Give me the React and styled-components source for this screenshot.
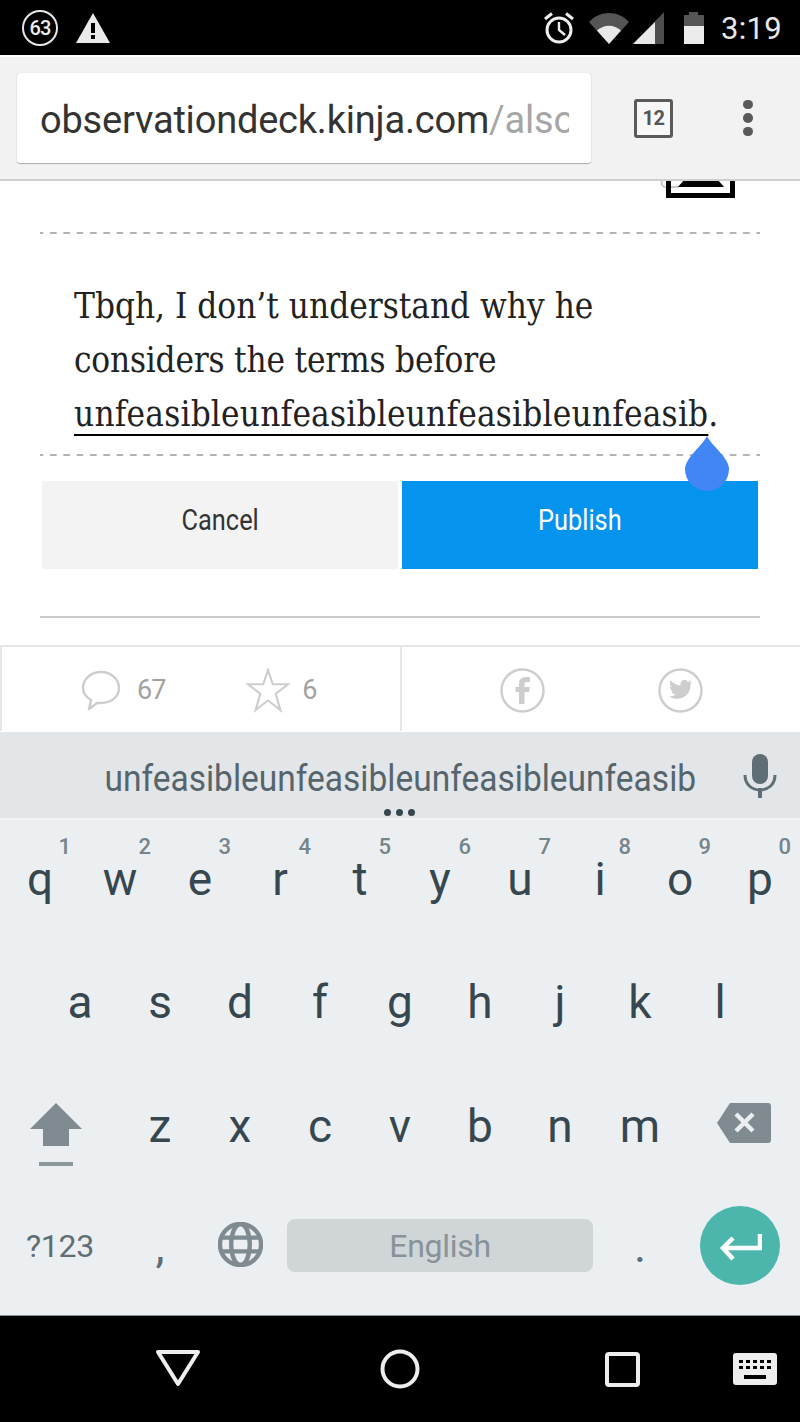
import React from "react";
import styled, { createGlobalStyle } from "styled-components";

const Global = createGlobalStyle`
  html, body { margin: 0; padding: 0; background: #000; }
  #root { width: 800px; height: 1422px; overflow: hidden; }
  * { box-sizing: border-box; }
`;
const Screen = styled.div`
  width: 800px; height: 1422px; display: flex; flex-direction: column;
  font-family: Roboto, "Liberation Sans", sans-serif; background: #fff;
`;
const StatusBar = styled.div`
  height: 55px; flex: none; background: #000; display: flex; align-items: center;
  justify-content: space-between; padding: 0 18px 0 22px; color: #eee;
`;
const StatusGroup = styled.div`display: flex; align-items: center; gap: ${p => p.$gap || 0}px;`;
const Time = styled.span`font-size: 31px; letter-spacing: 0.3px; margin-left: 16px; color: #e8e8e8; padding-top: 1px;`;
const Badge = styled.div`
  width: 36px; height: 36px; display: flex; align-items: center; justify-content: center;
  border-radius: 50%; border: 2px solid #e8e8e8; font-size: 20px; font-weight: 500; color: #eee; letter-spacing: -0.8px;
`;
const Toolbar = styled.div`
  height: 126px; flex: none; background: #f2f2f2; border-top: 2px solid #fff; border-bottom: 2px solid #cfcfcf;
  display: flex; align-items: center; padding: 0 0 0 17px;
`;
const UrlBox = styled.div`
  width: 574px; height: 90px; background: #fff; border-radius: 3px; box-shadow: 0 0 1px #bbb, 0 1px 1px #aaa;
  padding: 0 22px 0 23px; display: flex; align-items: center; overflow: hidden; white-space: nowrap; font-size: 38px; letter-spacing: -0.2px;
`;
const UrlClip = styled.div`overflow: hidden; width: 100%; line-height: 50px; padding-top: 4px;`;
const UrlHost = styled.span`color: #333;`;
const UrlPath = styled.span`color: #a6a6a6;`;
const TabCount = styled.div`
  margin-left: 43px; width: 39px; height: 39px; border: 3.5px solid #5a5a5a; border-radius: 3px; display: flex;
  align-items: center; justify-content: center; font-size: 20px; font-weight: 700; color: #555; background: #f7f7f7; letter-spacing: -0.5px;
`;
const MenuDots = styled.div`margin-left: 70px; display: flex; flex-direction: column; gap: 4px;`;
const MenuDot = styled.span`width: 9.5px; height: 9.5px; border-radius: 50%; background: #5a5a5a; display: block;`;
const Page = styled.div`flex: 1; overflow: hidden; background: #fff; display: flex; flex-direction: column; position: relative;`;
const Stub = styled.div`
  height: 19px; margin: -1px 65px 0 auto; width: 76px; flex: none; display: flex; align-items: flex-start;
`;
const Dashed = styled.div`
  margin: ${p => p.$top}px 40px 0; height: 2px; flex: none;
  background: linear-gradient(90deg, #b3b3b3 6.67px, transparent 6.67px);
  background-size: 13.333px 100%;
  background-position: 10px 0;
`;
const Body = styled.div`
  margin: 45px 40px 0; padding: 0 34px; height: 163px; flex: none; position: relative;
  font-family: "DejaVu Serif Condensed", "DejaVu Serif", serif; font-size: 34.8px; line-height: 54px; color: #222; white-space: nowrap;
`;
const Line = styled.div`letter-spacing: ${p => p.$ls || 0}px; height: 54px;`;
const Under = styled.span`
  text-decoration: underline; text-decoration-thickness: 2px; text-underline-offset: 8px; text-decoration-skip-ink: none; text-decoration-color: #000;
`;
const Handle = styled.svg`position: absolute; left: 684px; top: 255px; z-index: 2;`;
const Buttons = styled.div`display: flex; gap: 4px; margin: 25px 42px 0; height: 88px; flex: none;`;
const Btn = styled.div`
  flex: 1; display: flex; align-items: center; justify-content: center; padding-bottom: 10px;
  background: ${p => p.$primary ? "#0494ee" : "#f3f3f3"}; color: ${p => p.$primary ? "#fff" : "#333"};
`;
const BtnLabel = styled.span`display: inline-block; font-size: 29px; font-family: Roboto, sans-serif; font-weight: 400; transform: scaleX(0.875);`;
const Rule = styled.div`margin: 47px 40px 0; height: 2px; background: #c9c9c9; flex: none;`;
const Social = styled.div`
  margin-top: 27px; height: 86px; flex: none; border-top: 2px solid #e6e6e6; display: grid; grid-template-columns: 402px 1fr; position: relative;
`;
const SocialLeft = styled.div`
  border-left: 2px solid #e6e6e6; border-right: 2px solid #e6e6e6; display: flex; align-items: center; padding: 2px 0 0 79px;
  color: #a2a2a2; font-size: 27px; letter-spacing: -1px;
`;
const SocialRight = styled.div`display: flex; align-items: center; padding: 2px 0 0 98px; gap: 113px;`;
const Count = styled.span`margin-left: ${p => p.$ml}px; margin-right: ${p => p.$mr || 0}px;`;
const Keyboard = styled.div`height: 583px; flex: none; background: #eceff1; display: flex; flex-direction: column;`;
const Strip = styled.div`
  height: 88px; flex: none; background: #e3e6e8; position: relative; border-bottom: 2px solid #f2f4f5; display: flex; align-items: center; justify-content: center;
  font-size: 36.5px; color: #56646c; padding-top: 6px;
`;
const Word = styled.span`display: inline-block; white-space: nowrap; transform: scaleX(0.918);`;
const MicWrap = styled.svg`position: absolute; left: 743px; top: 22px;`;
const More = styled.div`position: absolute; left: 384px; top: 77px; display: flex; gap: 5px;`;
const MoreDot = styled.span`width: 7px; height: 7px; border-radius: 50%; background: #37474f;`;
const Rows = styled.div`flex: 1; display: flex; flex-direction: column;`;
const Row = styled.div`height: ${p => p.$h}px; display: flex; justify-content: ${p => p.$start ? "flex-start" : "center"}; align-items: flex-start; flex: none;`;
const Key = styled.div`
  width: ${p => p.$w || 80}px; flex: none; position: relative; height: 100%; display: flex; justify-content: center;
  font-size: 46px; color: #37474f; line-height: 1; padding-top: ${p => p.$pt}px;
`;
const Hint = styled.span`
  position: absolute; right: 9px; top: 12px; font-size: 22px; font-weight: 500; color: #76848b; line-height: 30px;
`;
const SpaceBar = styled.div`
  width: 306px; height: 53px; margin: 27px 7px 0; flex: none; border-radius: 8px; background: #d0d5d8; display: flex; align-items: center; justify-content: center;
  color: #889298; font-size: 32px; letter-spacing: -0.3px;
`;
const Sym = styled.div`
  width: ${p => p.$w}px; flex: none; height: 100%; display: flex; justify-content: center; padding-top: ${p => p.$pt}px;
  color: #5f6d75; font-size: ${p => p.$fs || 32}px; line-height: 1; letter-spacing: ${p => p.$ls || 0}px;
`;
const Enter = styled.div`
  width: 80px; height: 79px; border-radius: 50%; background: #4db6ac; display: flex; align-items: center; justify-content: center; margin: 14px 0 0 20px; padding-top: 4px; flex: none;
`;
const Nav = styled.div`height: 107px; flex: none; background: #000; border-top: 1px solid #888; position: relative; display: flex; align-items: center;`;
const NavIcon = styled.svg`position: absolute; left: ${p => p.$x}px; top: ${p => p.$y}px;`;

const row1 = [["q", 1], ["w", 2], ["e", 3], ["r", 4], ["t", 5], ["y", 6], ["u", 7], ["i", 8], ["o", 9], ["p", 0]];
const row2 = "asdfghjkl".split("");
const row3 = "zxcvbnm".split("");

export default function App() {
  return (
    <Screen>
      <Global />
      <StatusBar>
        <StatusGroup $gap={17}>
          <Badge>63</Badge>
          <svg width="36" height="30" viewBox="0 0 36 30">
            <path d="M18 0 L35 30 H1 Z" fill="#eaeaea" />
            <rect x="16" y="10" width="4" height="10" fill="#000" />
            <rect x="16" y="22" width="4" height="4" fill="#000" />
          </svg>
        </StatusGroup>
        <StatusGroup>
          <svg width="32" height="32" viewBox="0 0 32 32" style={{ marginRight: 14 }}>
            <circle cx="16" cy="18" r="12" fill="none" stroke="#eee" strokeWidth="3" />
            <path d="M16 10 V18 L22 23" fill="none" stroke="#eee" strokeWidth="2.4" />
            <path d="M2 7 L9 1.5 M30 7 L23 1.5" stroke="#eee" strokeWidth="3" />
          </svg>
          <svg width="40" height="32" viewBox="0 0 40 32" style={{ marginRight: 4 }}>
            <path d="M0 10 C11 -2 29 -2 40 10 L20 32 Z" fill="#555" />
            <path d="M8 18.5 C15 12 25 12 32 18.5 L20 32 Z" fill="#e8e8e8" />
          </svg>
          <svg width="31" height="32" viewBox="0 0 31 32" style={{ marginRight: 19 }}>
            <path d="M31 0 V32 H0 Z" fill="#4e4e4e" />
            <path d="M22 10 V32 H0 Z" fill="#e8e8e8" />
          </svg>
          <svg width="22" height="32" viewBox="0 0 22 32">
            <path d="M6 0 H15 V3 H21 V14 H1 V3 H6 Z" fill="#555" />
            <rect x="1" y="14" width="20" height="18" fill="#ececec" />
          </svg>
          <Time>3:19</Time>
        </StatusGroup>
      </StatusBar>
      <Toolbar>
        <UrlBox>
          <UrlClip>
            <UrlHost>observationdeck.kinja.com</UrlHost>
            <UrlPath>/also</UrlPath>
          </UrlClip>
        </UrlBox>
        <TabCount>12</TabCount>
        <MenuDots>
          <MenuDot /><MenuDot /><MenuDot />
        </MenuDots>
      </Toolbar>
      <Page>
        <Stub>
          <svg width="76" height="18" viewBox="0 0 76 18">
            <path d="M3 1 C2 5 4 7 7 7 H20" fill="none" stroke="#c8c8c8" strokeWidth="2" />
            <path d="M7 0 H12 V13 H71 V0 H76 V18 H7 Z" fill="#000" />
            <path d="M25 0 H59 L65 7 H19 Z" fill="#000" />
          </svg>
        </Stub>
        <Dashed $top={33} />
        <Body>
          <Line>Tbqh, I don’t understand why he</Line>
          <Line $ls={-0.2}>considers the terms before</Line>
          <Line $ls={0.21}><Under>unfeasibleunfeasibleunfeasibleunfeasib</Under>.</Line>
        </Body>
        <Dashed $top={12} />
        <Handle width="46" height="56" viewBox="0 0 46 56">
          <path d="M23 0 C27 9 45 22 45 33 A22 22 0 0 1 1 33 C1 22 19 9 23 0 Z" fill="#4285f4" />
        </Handle>
        <Buttons>
          <Btn><BtnLabel>Cancel</BtnLabel></Btn>
          <Btn $primary><BtnLabel>Publish</BtnLabel></Btn>
        </Buttons>
        <Rule />
        <Social>
          <SocialLeft>
            <svg width="40" height="40" viewBox="0 0 40 40">
              <path d="M20 2 C30 2 38 9 38 18 C38 27 30 33 20 33 H16 L8 39 L10 30 C5 27 2 23 2 18 C2 9 10 2 20 2 Z" fill="none" stroke="#cdcdcd" strokeWidth="2.4" />
            </svg>
            <Count $ml={16} $mr={81}>67</Count>
            <svg width="44" height="46" viewBox="0 0 46 46">
              <path d="M23 2 L28 17 H44 L31 27 L36 44 L23 34 L10 44 L15 27 L2 17 H18 Z" fill="none" stroke="#cdcdcd" strokeWidth="2.2" />
            </svg>
            <Count $ml={12}>6</Count>
          </SocialLeft>
          <SocialRight>
            <svg width="45" height="45" viewBox="0 0 45 45">
              <circle cx="22.5" cy="22.5" r="21" fill="none" stroke="#cdcdcd" strokeWidth="2.4" />
              <path d="M24.5 36 V24 H29 L30 19 H24.5 V16 C24.5 14.5 25.5 14 27 14 H30 V9 H26 C21 9 19 12 19 16 V19 H15.5 V24 H19 V36 Z" fill="#cdcdcd" />
            </svg>
            <svg width="45" height="45" viewBox="0 0 45 45">
              <circle cx="22.5" cy="22.5" r="21" fill="none" stroke="#cdcdcd" strokeWidth="2.4" />
              <path d="M34 14 C33 14.6 32 15 31 15 C32 14.4 33 13 33.2 12 C32 12.7 31 13.2 29.6 13.4 C27 10.5 21.6 12.7 22.6 17.4 C18.6 17.2 15 15.2 12.6 12.3 C11.2 14.6 12 17.6 14 19 C13.2 19 12.4 18.7 11.7 18.4 C11.8 20.8 13.4 22.7 15.6 23.2 C14.9 23.4 14.2 23.4 13.4 23.3 C14.2 25.2 15.8 26.4 17.8 26.5 C15.8 28 13.5 28.7 11 28.4 C21 34.5 33 28 32.4 17 C33 16 33.6 15 34 14 Z" fill="#cdcdcd" />
            </svg>
          </SocialRight>
        </Social>
      </Page>
      <Keyboard>
        <Strip>
          <Word>unfeasibleunfeasibleunfeasibleunfeasib</Word>
          <MicWrap width="34" height="44" viewBox="0 0 34 44">
            <rect x="9" y="0" width="16" height="30" rx="8" fill="#5f6d75" />
            <path d="M2 21 C2 41 32 41 32 21" fill="none" stroke="#5f6d75" strokeWidth="3" />
            <rect x="15" y="34" width="4" height="10" fill="#5f6d75" />
          </MicWrap>
          <More><MoreDot /><MoreDot /><MoreDot /></More>
        </Strip>
        <Rows>
          <Row $h={124}>
            {row1.map(([k, n]) => (
              <Key key={k} $pt={36}>{k}<Hint>{n}</Hint></Key>
            ))}
          </Row>
          <Row $h={124}>
            {row2.map(k => <Key key={k} $pt={35}>{k}</Key>)}
          </Row>
          <Row $h={124}>
            <Sym $w={120} $pt={34}>
              <svg width="120" height="70" viewBox="0 0 120 70">
                <path d="M56 4 L82 30 H69 V47 H43 V30 H30 Z" fill="#7f8b90" transform="translate(0,-3)" />
                <rect x="39" y="60" width="34" height="4" fill="#8c979c" />
              </svg>
            </Sym>
            {row3.map(k => <Key key={k} $pt={35}>{k}</Key>)}
            <Sym $w={120} $pt={35}>
              <svg width="120" height="44" viewBox="0 0 120 44">
                <path d="M14 20 L27 0 H65 A3 3 0 0 1 68 3 V37 A3 3 0 0 1 65 40 H27 Z" fill="#7f8b90" transform="translate(23,0)" />
                <path d="M56 11 L73 28 M73 11 L56 28" stroke="#eceff1" strokeWidth="4.5" />
              </svg>
            </Sym>
          </Row>
          <Row $h={123} $start>
            <Sym $w={120} $pt={38} $ls={-0.3}>?123</Sym>
            <Sym $w={80} $pt={31} $fs={46}>,</Sym>
            <Sym $w={80} $pt={30}>
              <svg width="45" height="45" viewBox="0 0 46 46">
                <circle cx="23" cy="23" r="21" fill="none" stroke="#7f8b90" strokeWidth="4.5" />
                <ellipse cx="23" cy="23" rx="9.5" ry="21" fill="none" stroke="#7f8b90" strokeWidth="4.5" />
                <path d="M3 16 H43 M3 30 H43" stroke="#7f8b90" strokeWidth="4.5" />
              </svg>
            </Sym>
            <SpaceBar>English</SpaceBar>
            <Sym $w={80} $pt={31} $fs={46}>.</Sym>
            <Enter>
              <svg width="44" height="28" viewBox="0 0 44 28">
                <path d="M42 0 V14 H6 M15 4 L5 14 L15 25" fill="none" stroke="#fff" strokeWidth="4.5" />
              </svg>
            </Enter>
          </Row>
        </Rows>
      </Keyboard>
      <Nav>
        <NavIcon $x={155} $y={33} width="46" height="38" viewBox="0 0 46 38">
          <path d="M3 3 H43 L23 35 Z" fill="none" stroke="#eee" strokeWidth="4" strokeLinejoin="round" />
        </NavIcon>
        <NavIcon $x={380} $y={33} width="40" height="40" viewBox="0 0 40 40">
          <circle cx="20" cy="20" r="17.5" fill="none" stroke="#eee" strokeWidth="4" />
        </NavIcon>
        <NavIcon $x={605} $y={36} width="35" height="35" viewBox="0 0 35 35">
          <rect x="2" y="2" width="31" height="31" rx="2" fill="none" stroke="#eee" strokeWidth="4" />
        </NavIcon>
        <NavIcon $x={733} $y={37} width="44" height="32" viewBox="0 0 44 32">
          <rect width="44" height="32" rx="3" fill="#eee" />
          <path d="M6 7 h4 v3 h-4z M13 7 h4 v3 h-4z M20 7 h4 v3 h-4z M27 7 h4 v3 h-4z M34 7 h4 v3 h-4z M6 13 h4 v3 h-4z M13 13 h4 v3 h-4z M20 13 h4 v3 h-4z M27 13 h4 v3 h-4z M34 13 h4 v3 h-4z M11 22 h22 v4 h-22z" fill="#000" />
        </NavIcon>
      </Nav>
    </Screen>
  );
}
